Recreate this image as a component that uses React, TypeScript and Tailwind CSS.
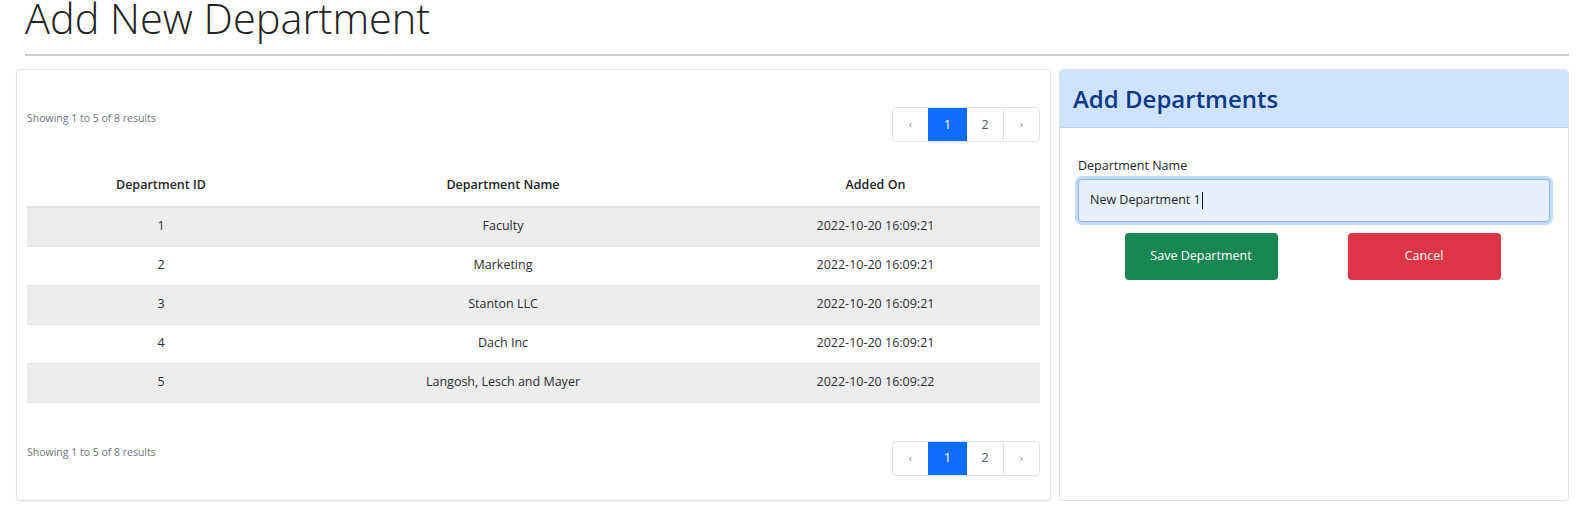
import React from "react";

const rows = [
  { id: 1, name: "Faculty", added: "2022-10-20 16:09:21" },
  { id: 2, name: "Marketing", added: "2022-10-20 16:09:21" },
  { id: 3, name: "Stanton LLC", added: "2022-10-20 16:09:21" },
  { id: 4, name: "Dach Inc", added: "2022-10-20 16:09:21" },
  { id: 5, name: "Langosh, Lesch and Mayer", added: "2022-10-20 16:09:22" },
];

function Pager() {
  return (
    <div className="flex h-[35px] rounded-[4px] border border-[#dee2e6] text-[13px]">
      <div className="flex w-[35px] items-center justify-center text-[11px] text-[#8a939c]">‹</div>
      <div className="flex w-[39px] items-center justify-center bg-[#0d6efd] text-white">1</div>
      <div className="flex w-[37px] items-center justify-center border-r border-[#dee2e6] text-[#52627a]">2</div>
      <div className="flex w-[35px] items-center justify-center text-[11px] text-[#8a939c]">›</div>
    </div>
  );
}

function ResultsBar() {
  return (
    <div className="flex items-start justify-between">
      <span className="mt-[3px] text-[10.5px] leading-4 text-[#6c757d]">Showing 1 to 5 of 8 results</span>
      <Pager />
    </div>
  );
}

export default function App() {
  return (
    <div className="min-h-[530px] bg-white px-[16px] text-[#212529]" style={{ fontFamily: '"Open Sans", "Noto Sans", sans-serif' }}>
      {/* Page heading */}
      <div className="pl-[9px]">
        <h1 className="text-[41.5px] font-light leading-[36px] text-[#222]">Add New Department</h1>
        <div className="mt-[18px] h-[2px] bg-[#cbcbcb]" />
      </div>

      <div className="mt-[13px] flex gap-[8px]">
        {/* Department list */}
        <div className="h-[432px] w-[1035px] rounded-[4px] border border-[#dee2e6] px-[10px] pt-[37px] shadow-[0_1px_2px_rgba(0,0,0,0.06)]">
          <ResultsBar />

          <table className="mt-[25px] w-full table-fixed border-collapse text-[12.5px]">
            <thead>
              <tr className="border-b-2 border-[#dee2e6]">
                <th className="w-[268px] pt-[8px] pb-[11px] text-center font-semibold leading-5">Department ID</th>
                <th className="w-[416px] pt-[8px] pb-[11px] text-center font-semibold leading-5">Department Name</th>
                <th className="pt-[8px] pb-[11px] text-center font-semibold leading-5">Added On</th>
              </tr>
            </thead>
            <tbody className="text-[#2b2f33]">
              {rows.map((r, i) => (
                <tr key={r.id} className={`h-[39px] border-b border-[#dee2e6] ${i % 2 === 0 ? "bg-[#ececec]" : "bg-white"}`}>
                  <td className="text-center">{r.id}</td>
                  <td className="text-center">{r.name}</td>
                  <td className="text-center">{r.added}</td>
                </tr>
              ))}
            </tbody>
          </table>

          <div className="mt-[38px]">
            <ResultsBar />
          </div>
        </div>

        {/* Add form */}
        <div className="h-[432px] flex-1 rounded-[4px] border border-[#dee2e6]">
          <div className="flex h-[58px] items-center rounded-t-[4px] border-b border-[#b6d4fe] bg-[#cfe2ff] px-[13px]">
            <h3 className="text-[24px] font-semibold text-[#0a3a8a]">Add Departments</h3>
          </div>
          <div className="px-[18px] pt-[28px]">
            <label className="block text-[12.5px] leading-5 text-[#212529]">Department Name</label>
            <div className="mt-[3px] flex h-[43px] items-center rounded-[4px] border border-[#86b7fe] bg-[#e8f0fe] px-[11px] text-[12.5px] shadow-[0_0_0_3px_rgba(13,110,253,0.25)]">
              <span>New Department 1</span>
              <span className="ml-[1px] h-[17px] w-px bg-[#111]" />
            </div>
            <div className="mt-[11px] grid grid-cols-2">
              <div className="flex justify-center pl-[10px]">
                <button className="h-[47px] w-[153px] rounded-[4px] bg-[#198754] text-[12.5px] text-white">Save Department</button>
              </div>
              <div className="flex justify-center pr-[16px]">
                <button className="h-[47px] w-[153px] rounded-[4px] bg-[#dc3545] text-[12.5px] text-white">Cancel</button>
              </div>
            </div>
          </div>
        </div>
      </div>
    </div>
  );
}
